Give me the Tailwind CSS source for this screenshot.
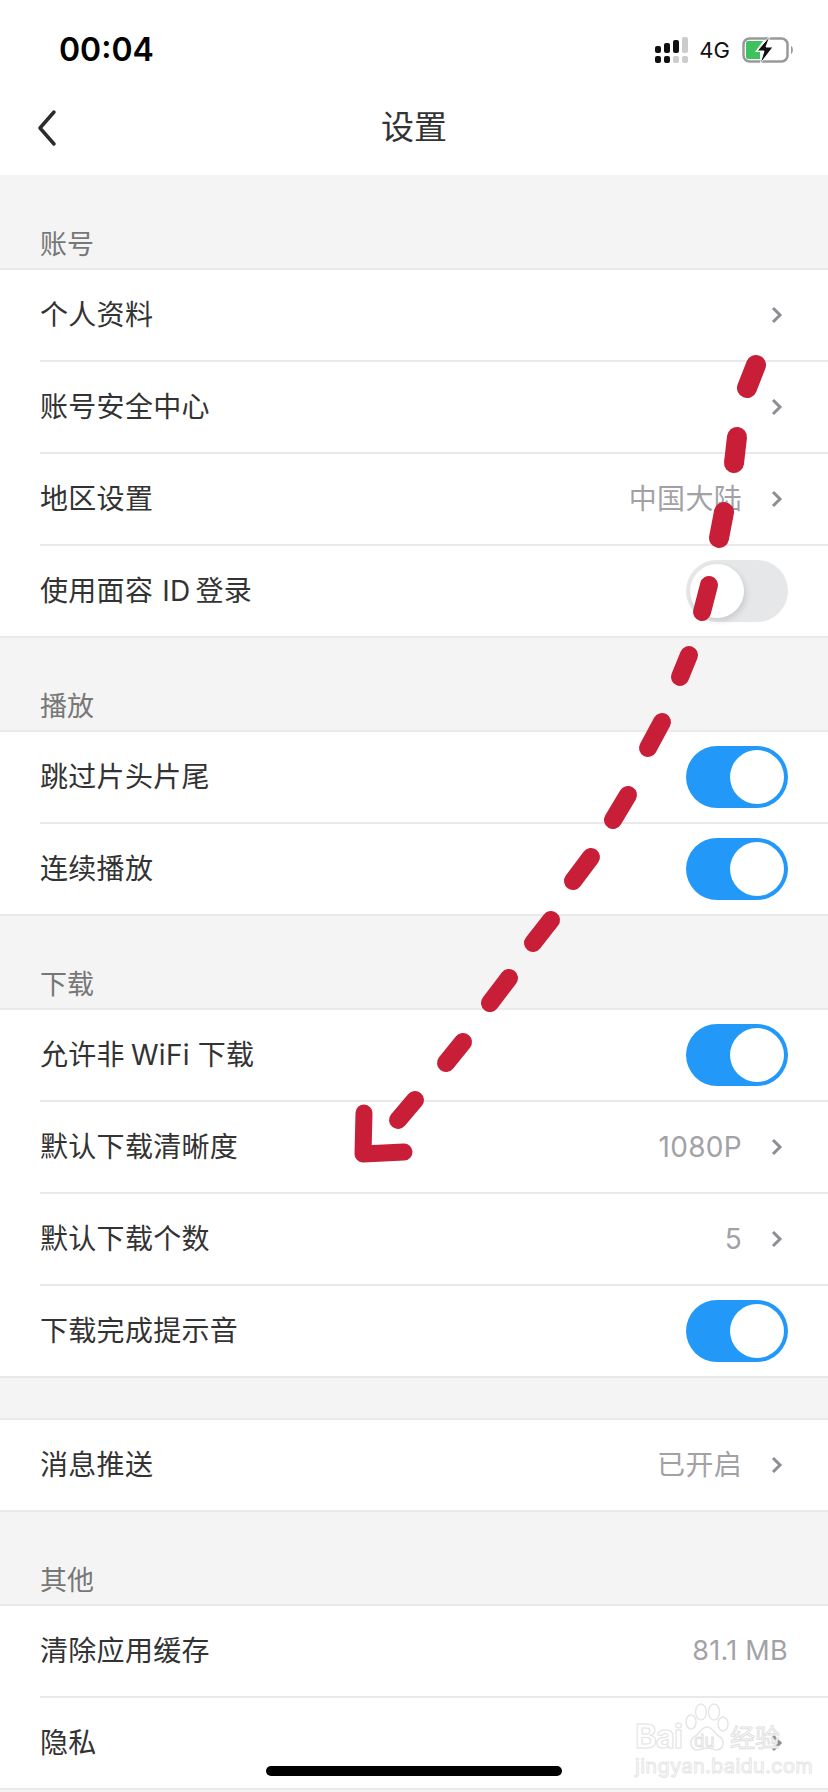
<!DOCTYPE html>
<html lang="zh-CN">
<head>
  <meta charset="UTF-8" />
  <meta name="viewport" content="width=device-width, initial-scale=1.0">
  <title>设置</title>
  <script src="https://cdn.jsdelivr.net/npm/@tailwindcss/browser@4"></script>
</head>
<body class="bg-[#f4f4f4] font-['Inter','Noto_Sans_CJK_SC',sans-serif]">
<div class="relative w-[828px] h-[1792px] overflow-hidden">

  <!-- status bar + nav -->
  <header class="bg-white h-[175px]">
    <div class="h-[88px] flex items-center justify-between pl-[59px] pr-[34px] pt-[12px]">
      <span class="text-[32px] font-semibold text-black leading-none">00:04</span>
      <div class="flex items-center">
        <svg width="34" height="26" viewBox="0 0 34 26">
          <g fill="#111">
            <rect x="0" y="9" width="6" height="7" rx="2" />
            <rect x="9" y="6" width="6" height="10" rx="2" />
            <rect x="18" y="3" width="6" height="13" rx="2" />
            <rect x="0" y="19" width="6" height="7" rx="2" />
            <rect x="9" y="19" width="6" height="7" rx="2" />
          </g>
          <g fill="#ccc">
            <rect x="27" y="0" width="6" height="16" rx="2" />
            <rect x="18" y="19" width="6" height="7" rx="2" />
            <rect x="27" y="19" width="6" height="7" rx="2" />
          </g>
        </svg>
        <span class="ml-[10px] mr-[12px] text-[22px] text-[#111] leading-none">4G</span>
        <svg width="52" height="28" viewBox="0 0 52 28">
          <rect x="1.5" y="2.5" width="44" height="23" rx="6" fill="none" stroke="#999" stroke-width="2.5" />
          <path d="M6 5h15l-8 11h5v7H6a2 2 0 0 1-2-2V7a2 2 0 0 1 2-2z" fill="#3fc25d" />
          <path d="M49 10c2.500 1 2.500 7 0 8z" fill="#999" />
          <path d="M28 0 15 15h7l-4 13 13-17h-7z" fill="#111" stroke="#fff" stroke-width="1" />
        </svg>
      </div>
    </div>
    <div class="relative h-[87px] flex items-center justify-center pb-[8px]">
      <svg class="absolute left-[36px] top-[21px]" width="22" height="38" viewBox="0 0 22 38">
        <path d="M18 3 4 19l14 16" fill="none" stroke="#2c2c2c" stroke-width="3.500" stroke-linecap="round" stroke-linejoin="round" />
      </svg>
      <h1 class="text-[33px] text-[#333] leading-none">设置</h1>
    </div>
  </header>

  <main>
    <h2 class="h-[93px] flex items-end pl-[40px] pb-[4px] text-[27px] leading-[38px] text-[#777]">账号</h2>
    <ul class="bg-white border-b-2 border-[#e9e9e9]">
      <li class="h-[92px] pl-[40px] pr-[45px] flex items-center border-t-2 border-[#e9e9e9] text-[28px] tracking-[0.3px] text-[#333]">
        <span class="flex-1">个人资料</span>
        <svg width="12" height="18" viewBox="0 0 12 18"><path d="m2 2 7 7-7 7" fill="none" stroke="#8e8e93" stroke-width="3" /></svg>
      </li>
      <li class="h-[92px] ml-[40px] pr-[45px] flex items-center border-t-2 border-[#e9e9e9] text-[28px] tracking-[0.3px] text-[#333]">
        <span class="flex-1">账号安全中心</span>
        <svg width="12" height="18" viewBox="0 0 12 18"><path d="m2 2 7 7-7 7" fill="none" stroke="#8e8e93" stroke-width="3" /></svg>
      </li>
      <li class="h-[92px] ml-[40px] pr-[45px] flex items-center border-t-2 border-[#e9e9e9] text-[28px] tracking-[0.3px] text-[#333]">
        <span class="flex-1">地区设置</span>
        <span class="text-[#a2a2a6] mr-[29px]">中国大陆</span>
        <svg width="12" height="18" viewBox="0 0 12 18"><path d="m2 2 7 7-7 7" fill="none" stroke="#8e8e93" stroke-width="3" /></svg>
      </li>
      <li class="h-[92px] ml-[40px] pr-[40px] flex items-center border-t-2 border-[#e9e9e9] text-[28px] tracking-[0.3px] text-[#333]">
        <span class="flex-1">使用面容<span class="ml-[9px] mr-[5px]">ID</span>登录</span>
        <div class="w-[102px] h-[62px] rounded-full bg-[#e6e7e9] p-[4px] flex justify-start">
          <div class="w-[54px] h-[54px] rounded-full bg-white shadow-[2px_3px_6px_rgba(0,0,0,0.12)]"></div>
        </div>
      </li>
    </ul>

    <h2 class="h-[92px] flex items-end pl-[40px] pb-[4px] text-[27px] leading-[38px] text-[#777]">播放</h2>
    <ul class="bg-white border-b-2 border-[#e9e9e9]">
      <li class="h-[92px] pl-[40px] pr-[40px] flex items-center border-t-2 border-[#e9e9e9] text-[28px] tracking-[0.3px] text-[#333]">
        <span class="flex-1">跳过片头片尾</span>
        <div class="w-[102px] h-[62px] rounded-full bg-[#2299f8] p-[4px] flex justify-end">
          <div class="w-[54px] h-[54px] rounded-full bg-white"></div>
        </div>
      </li>
      <li class="h-[92px] ml-[40px] pr-[40px] flex items-center border-t-2 border-[#e9e9e9] text-[28px] tracking-[0.3px] text-[#333]">
        <span class="flex-1">连续播放</span>
        <div class="w-[102px] h-[62px] rounded-full bg-[#2299f8] p-[4px] flex justify-end">
          <div class="w-[54px] h-[54px] rounded-full bg-white"></div>
        </div>
      </li>
    </ul>

    <h2 class="h-[92px] flex items-end pl-[40px] pb-[4px] text-[27px] leading-[38px] text-[#777]">下载</h2>
    <ul class="bg-white border-b-2 border-[#e9e9e9]">
      <li class="h-[92px] pl-[40px] pr-[40px] flex items-center border-t-2 border-[#e9e9e9] text-[28px] tracking-[0.3px] text-[#333]">
        <span class="flex-1">允许非<span class="ml-[6px] mr-[8px]">WiFi</span>下载</span>
        <div class="w-[102px] h-[62px] rounded-full bg-[#2299f8] p-[4px] flex justify-end">
          <div class="w-[54px] h-[54px] rounded-full bg-white"></div>
        </div>
      </li>
      <li class="h-[92px] ml-[40px] pr-[45px] flex items-center border-t-2 border-[#e9e9e9] text-[28px] tracking-[0.3px] text-[#333]">
        <span class="flex-1">默认下载清晰度</span>
        <span class="text-[#a2a2a6] mr-[29px]">1080P</span>
        <svg width="12" height="18" viewBox="0 0 12 18"><path d="m2 2 7 7-7 7" fill="none" stroke="#8e8e93" stroke-width="3" /></svg>
      </li>
      <li class="h-[92px] ml-[40px] pr-[45px] flex items-center border-t-2 border-[#e9e9e9] text-[28px] tracking-[0.3px] text-[#333]">
        <span class="flex-1">默认下载个数</span>
        <span class="text-[#a2a2a6] mr-[29px]">5</span>
        <svg width="12" height="18" viewBox="0 0 12 18"><path d="m2 2 7 7-7 7" fill="none" stroke="#8e8e93" stroke-width="3" /></svg>
      </li>
      <li class="h-[92px] ml-[40px] pr-[40px] flex items-center border-t-2 border-[#e9e9e9] text-[28px] tracking-[0.3px] text-[#333]">
        <span class="flex-1">下载完成提示音</span>
        <div class="w-[102px] h-[62px] rounded-full bg-[#2299f8] p-[4px] flex justify-end">
          <div class="w-[54px] h-[54px] rounded-full bg-white"></div>
        </div>
      </li>
    </ul>

    <div class="h-[40px]"></div>
    <ul class="bg-white border-b-2 border-[#e9e9e9]">
      <li class="h-[92px] pl-[40px] pr-[45px] flex items-center border-t-2 border-[#e9e9e9] text-[28px] tracking-[0.3px] text-[#333]">
        <span class="flex-1">消息推送</span>
        <span class="text-[#a2a2a6] mr-[29px]">已开启</span>
        <svg width="12" height="18" viewBox="0 0 12 18"><path d="m2 2 7 7-7 7" fill="none" stroke="#8e8e93" stroke-width="3" /></svg>
      </li>
    </ul>

    <h2 class="h-[92px] flex items-end pl-[40px] pb-[4px] text-[27px] leading-[38px] text-[#777]">其他</h2>
    <ul class="bg-white border-b-2 border-[#e9e9e9]">
      <li class="h-[92px] pl-[40px] pr-[40px] flex items-center border-t-2 border-[#e9e9e9] text-[28px] tracking-[0.3px] text-[#333]">
        <span class="flex-1">清除应用缓存</span>
        <span class="text-[#a2a2a6] text-[27px]">81.1 MB</span>
      </li>
      <li class="h-[92px] ml-[40px] pr-[45px] flex items-center border-t-2 border-[#e9e9e9] text-[28px] tracking-[0.3px] text-[#333]">
        <span class="flex-1">隐私</span>
        <svg width="12" height="18" viewBox="0 0 12 18"><path d="m2 2 7 7-7 7" fill="none" stroke="#8e8e93" stroke-width="3" /></svg>
      </li>
    </ul>
  </main>

  <!-- baidu watermark -->
  <div class="absolute left-[635px] top-[1703px] w-[150px] h-[72px]">
    <svg class="absolute left-[50px] top-0" width="44" height="50" viewBox="0 0 44 50" fill="none" stroke="#e6e6e6" stroke-width="1.500">
      <ellipse cx="6" cy="19" rx="5" ry="7" />
      <ellipse cx="16" cy="9" rx="5.500" ry="8" />
      <ellipse cx="29" cy="9" rx="5.500" ry="8" />
      <ellipse cx="38" cy="21" rx="5" ry="7" />
      <path d="M22 24c-6 0-7 7-13 10-5 3-4 12 3 13 4 0 6-2 10-2s6 2 10 2c7-1 8-10 3-13-6-3-7-10-13-10z" />
    </svg>
    <span class="absolute left-0 top-[17px] text-[33px] font-bold leading-none tracking-[-1px] text-white [-webkit-text-stroke:1px_#e2e2e2]">Bai</span>
    <span class="absolute left-[59px] top-[30px] text-[17px] leading-none text-white [-webkit-text-stroke:1px_#e2e2e2]">du</span>
    <span class="absolute left-[95px] top-[23px] text-[25px] leading-none text-white [-webkit-text-stroke:1px_#e2e2e2]">经验</span>
    <span class="absolute left-0 top-[53px] text-[20px] leading-none tracking-[0.3px] text-white [-webkit-text-stroke:1px_#e6e6e6]">jingyan.baidu.com</span>
  </div>

  <!-- hand drawn arrow on top of the list -->
  <svg class="absolute left-0 top-0 pointer-events-none" width="828" height="1792" viewBox="0 0 828 1792" fill="none" stroke="#c81e38" stroke-linecap="round" stroke-linejoin="round">
    <g stroke-width="20">
      <path d="M756 365 747 388" />
      <path d="M737 437 734 463" />
      <path d="M724 512 719 538" />
    </g>
    <g stroke-width="18">
      <path d="M709 585 702 612" />
      <path d="M689 655 680 677" />
      <path d="M662 722 648 748" />
      <path d="M628 795 613 820" />
      <path d="M591 857 573 881" />
      <path d="M551 920 533 943" />
      <path d="M509 978 490 1003" />
      <path d="M463 1042 446 1063" />
      <path d="M415 1100 398 1120" />
    </g>
    <path d="M364 1113 363 1154 404 1152" stroke-width="17" />
  </svg>

  <!-- home indicator -->
  <div class="absolute left-[266px] top-[1766px] w-[296px] h-[10px] rounded-full bg-black"></div>
</div>
</body>
</html>
